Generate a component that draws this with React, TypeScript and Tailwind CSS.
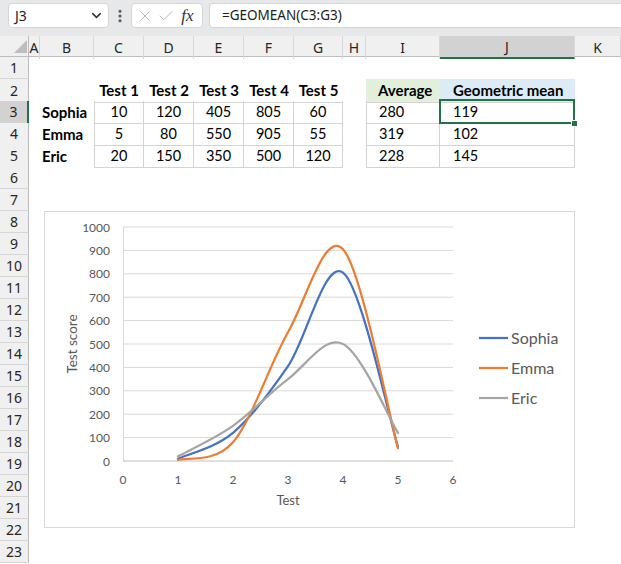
import React from "react";
import { ChevronDown, EllipsisVertical, X, Check } from "lucide-react";

const GRID =
  "grid grid-cols-[29px_11px_54px_50px_50px_50px_50px_49px_23px_74px_135px_46px]";
const COLS = ["A", "B", "C", "D", "E", "F", "G", "H", "I", "J", "K"];
const TESTS = ["Test 1", "Test 2", "Test 3", "Test 4", "Test 5"];
const NAMES = ["Sophia", "Emma", "Eric"];
const SCORES = [
  [10, 120, 405, 805, 60],
  [5, 80, 550, 905, 55],
  [20, 150, 350, 500, 120],
];
const AVG = [280, 319, 228];
const GEO = [119, 102, 145];

const px = (x: number) => 78 + 55 * x;
const py = (v: number) => 249 - 0.234 * v;

function smoothPath(vals: number[]) {
  const pts = vals.map((v, i) => [px(i + 1), py(v)]);
  let d = `M${pts[0][0]},${pts[0][1]}`;
  for (let i = 0; i < pts.length - 1; i++) {
    const p0 = pts[i - 1] ?? pts[i];
    const p1 = pts[i];
    const p2 = pts[i + 1];
    const p3 = pts[i + 2] ?? pts[i + 1];
    const c1 = [p1[0] + (p2[0] - p0[0]) / 6, p1[1] + (p2[1] - p0[1]) / 6];
    const c2 = [p2[0] - (p3[0] - p1[0]) / 6, p2[1] - (p3[1] - p1[1]) / 6];
    d += ` C${c1[0]},${c1[1]} ${c2[0]},${c2[1]} ${p2[0]},${p2[1]}`;
  }
  return d;
}

function RowHeader({ r }: { r: number }) {
  if (r === 3) {
    return (
      <div className="flex items-center justify-center bg-[#d2d2d2] border-r-2 border-r-[#217346] border-b border-b-[#d6d6d6] text-[14px] text-[#262626] font-['Noto_Sans',sans-serif]">
        {r}
      </div>
    );
  }
  return (
    <div className="flex items-center justify-center bg-[#f0f0f0] border-r border-r-[#bcbcbc] border-b border-b-[#d6d6d6] text-[14px] text-[#262626] font-['Noto_Sans',sans-serif]">
      {r}
    </div>
  );
}

function Blank() {
  return <div />;
}

function Row({ r }: { r: number }) {
  const cells: React.ReactNode[] = [];
  if (r === 2) {
    cells.push(<Blank key="a" />, <Blank key="b" />);
    TESTS.forEach((t) =>
      cells.push(
        <div
          key={t}
          className="flex items-center justify-center font-bold text-[15px] border-b border-[#d4d4d4]"
        >
          {t}
        </div>
      )
    );
    cells.push(<Blank key="h" />);
    cells.push(
      <div
        key="i"
        className="flex items-center pl-3 font-bold text-[15px] bg-[#e2efda] border-b border-[#d4d4d4]"
      >
        Average
      </div>
    );
    cells.push(
      <div
        key="j"
        className="flex items-center pl-[13px] font-bold text-[15px] bg-[#ddebf7] border-b border-[#d4d4d4]"
      >
        Geometric mean
      </div>
    );
    cells.push(<Blank key="k" />);
  } else if (r >= 3 && r <= 5) {
    const k = r - 3;
    cells.push(<Blank key="a" />);
    cells.push(
      <div key="b" className="flex items-center pl-[2px] font-bold text-[15px]">
        {NAMES[k]}
      </div>
    );
    SCORES[k].forEach((v, i) =>
      cells.push(
        <div
          key={"s" + i}
          className={
            i === 0
              ? "flex items-center justify-center border-l border-r border-b border-[#d4d4d4]"
              : "flex items-center justify-center border-r border-b border-[#d4d4d4]"
          }
        >
          {v}
        </div>
      )
    );
    cells.push(<Blank key="h" />);
    cells.push(
      <div
        key="i"
        className="flex items-center pl-3 border-l border-r border-b border-[#d4d4d4]"
      >
        {AVG[k]}
      </div>
    );
    cells.push(
      <div
        key="j"
        className="relative flex items-center pl-[13px] border-r border-b border-[#d4d4d4]"
      >
        {GEO[k]}
        {r === 3 && (
          <div className="absolute top-[-2px] left-[-1px] right-[-1px] bottom-[-1px] border-2 border-[#217346] z-10">
            <div className="absolute right-[-5px] bottom-[-5px] w-[7px] h-[7px] bg-[#217346] border border-white" />
          </div>
        )}
      </div>
    );
    cells.push(<Blank key="k" />);
  } else {
    for (let i = 0; i < 11; i++) cells.push(<Blank key={i} />);
  }
  return (
    <div className={GRID + " h-[22px]"}>
      <RowHeader r={r} />
      {cells}
    </div>
  );
}

function Chart() {
  const gridVals = [100, 200, 300, 400, 500, 600, 700, 800, 900, 1000];
  const yLabels = [0, 100, 200, 300, 400, 500, 600, 700, 800, 900, 1000];
  const series = [
    { name: "Sophia", color: "#4472c4", vals: SCORES[0] },
    { name: "Emma", color: "#ed7d31", vals: SCORES[1] },
    { name: "Eric", color: "#a5a5a5", vals: SCORES[2] },
  ];
  return (
    <div className="absolute left-[44px] top-[211px] w-[531px] h-[317px] bg-white border border-[#d9d9d9] z-20">
      <svg width="529" height="315" viewBox="0 0 529 315">
        {gridVals.map((v) => (
          <line
            key={v}
            x1={px(0)}
            x2={px(6)}
            y1={py(v)}
            y2={py(v)}
            stroke="#d9d9d9"
            strokeWidth="1"
          />
        ))}
        <line x1={px(0) + 0.5} x2={px(0) + 0.5} y1={py(1000)} y2={py(0)} stroke="#d9d9d9" />
        <line x1={px(0)} x2={px(6)} y1={py(0)} y2={py(0)} stroke="#bfbfbf" />
        {yLabels.map((v) => (
          <text
            key={v}
            x="65"
            y={py(v)}
            textAnchor="end"
            dominantBaseline="central"
            fontFamily="Lato, sans-serif"
            fontSize="12"
            fill="#595959"
          >
            {v}
          </text>
        ))}
        {[0, 1, 2, 3, 4, 5, 6].map((x) => (
          <text
            key={x}
            x={px(x)}
            y="267"
            textAnchor="middle"
            dominantBaseline="central"
            fontFamily="Lato, sans-serif"
            fontSize="12"
            fill="#595959"
          >
            {x}
          </text>
        ))}
        <text
          x="243"
          y="288"
          textAnchor="middle"
          dominantBaseline="central"
          fontFamily="Lato, sans-serif"
          fontSize="13"
          fill="#595959"
        >
          Test
        </text>
        <text
          x="0"
          y="0"
          transform="translate(27,132) rotate(-90)"
          textAnchor="middle"
          dominantBaseline="central"
          fontFamily="Lato, sans-serif"
          fontSize="13.5"
          fill="#595959"
        >
          Test score
        </text>
        {series.map((s) => (
          <path
            key={s.name}
            d={smoothPath(s.vals)}
            fill="none"
            stroke={s.color}
            strokeWidth="2.25"
            strokeLinecap="round"
            strokeLinejoin="round"
          />
        ))}
        {series.map((s, i) => (
          <g key={s.name}>
            <line
              x1="434"
              x2="463"
              y1={126 + i * 30}
              y2={126 + i * 30}
              stroke={s.color}
              strokeWidth="2.25"
            />
            <text
              x="466"
              y={125 + i * 30}
              dominantBaseline="central"
              fontFamily="Lato, sans-serif"
              fontSize="16"
              fill="#595959"
            >
              {s.name}
            </text>
          </g>
        ))}
      </svg>
    </div>
  );
}

export default function App() {
  const rows = Array.from({ length: 23 }, (_, i) => i + 1);
  return (
    <div className="relative w-[621px] h-[564px] overflow-hidden bg-white font-['Lato',sans-serif] text-[14.5px] text-black">
      {/* formula bar */}
      <div className="flex items-start h-[36px] pt-[3px] bg-[#e7e8ea]">
        <div className="ml-[8px] w-[101px] h-[25px] flex items-center justify-between pl-[6px] pr-[4px] bg-white border border-[#d5d6d8] rounded-[4px]">
          <span className="text-[14px] text-[#222] font-['Noto_Sans',sans-serif]">J3</span>
          <ChevronDown size={15} strokeWidth={2.4} color="#333" />
        </div>
        <div className="w-[22px] h-[25px] flex items-center justify-center">
          <EllipsisVertical size={16} strokeWidth={2.6} color="#555" />
        </div>
        <div className="w-[72px] h-[25px] flex items-center bg-white border border-[#d5d6d8] rounded-[4px]">
          <div className="w-[24px] flex justify-center ml-[1px]">
            <X size={18} strokeWidth={1.1} color="#a8a8a8" />
          </div>
          <div className="w-[18px] flex justify-center">
            <Check size={18} strokeWidth={1.1} color="#a8a8a8" />
          </div>
          <div className="flex-1 flex justify-center pr-[2px] font-['Liberation_Serif',serif] italic text-[17px] text-[#333]">
            fx
          </div>
        </div>
        <div className="ml-[6px] flex-1 h-[25px] flex items-center pl-[12px] bg-white border border-[#d5d6d8] border-r-0 rounded-l-[4px] text-[13.5px] text-[#222] font-['Noto_Sans',sans-serif]">
          =GEOMEAN(C3:G3)
        </div>
      </div>

      {/* column headers */}
      <div className={GRID + " h-[21px] bg-[#f0f0f0] border-b border-[#bdbdbd]"}>
        <div className="relative border-r border-[#bcbcbc]">
          <svg width="28" height="20" className="absolute left-0 top-0">
            <polygon points="14,17 27,17 27,4" fill="#bdbdbd" />
          </svg>
        </div>
        {COLS.map((c) =>
          c === "J" ? (
            <div
              key={c}
              className="flex items-center justify-center bg-[#d2d2d2] border-b-2 border-[#217346] border-r border-r-[#d8d8d8] text-[14px] text-[#262626] font-['Noto_Sans',sans-serif]"
            >
              {c}
            </div>
          ) : (
            <div
              key={c}
              className="flex items-center justify-center border-r border-[#d8d8d8] text-[14px] text-[#262626] font-['Noto_Sans',sans-serif]"
            >
              {c}
            </div>
          )
        )}
      </div>

      {/* rows */}
      <div className="flex flex-col">
        {rows.map((r) => (
          <Row key={r} r={r} />
        ))}
      </div>

      <Chart />
    </div>
  );
}
